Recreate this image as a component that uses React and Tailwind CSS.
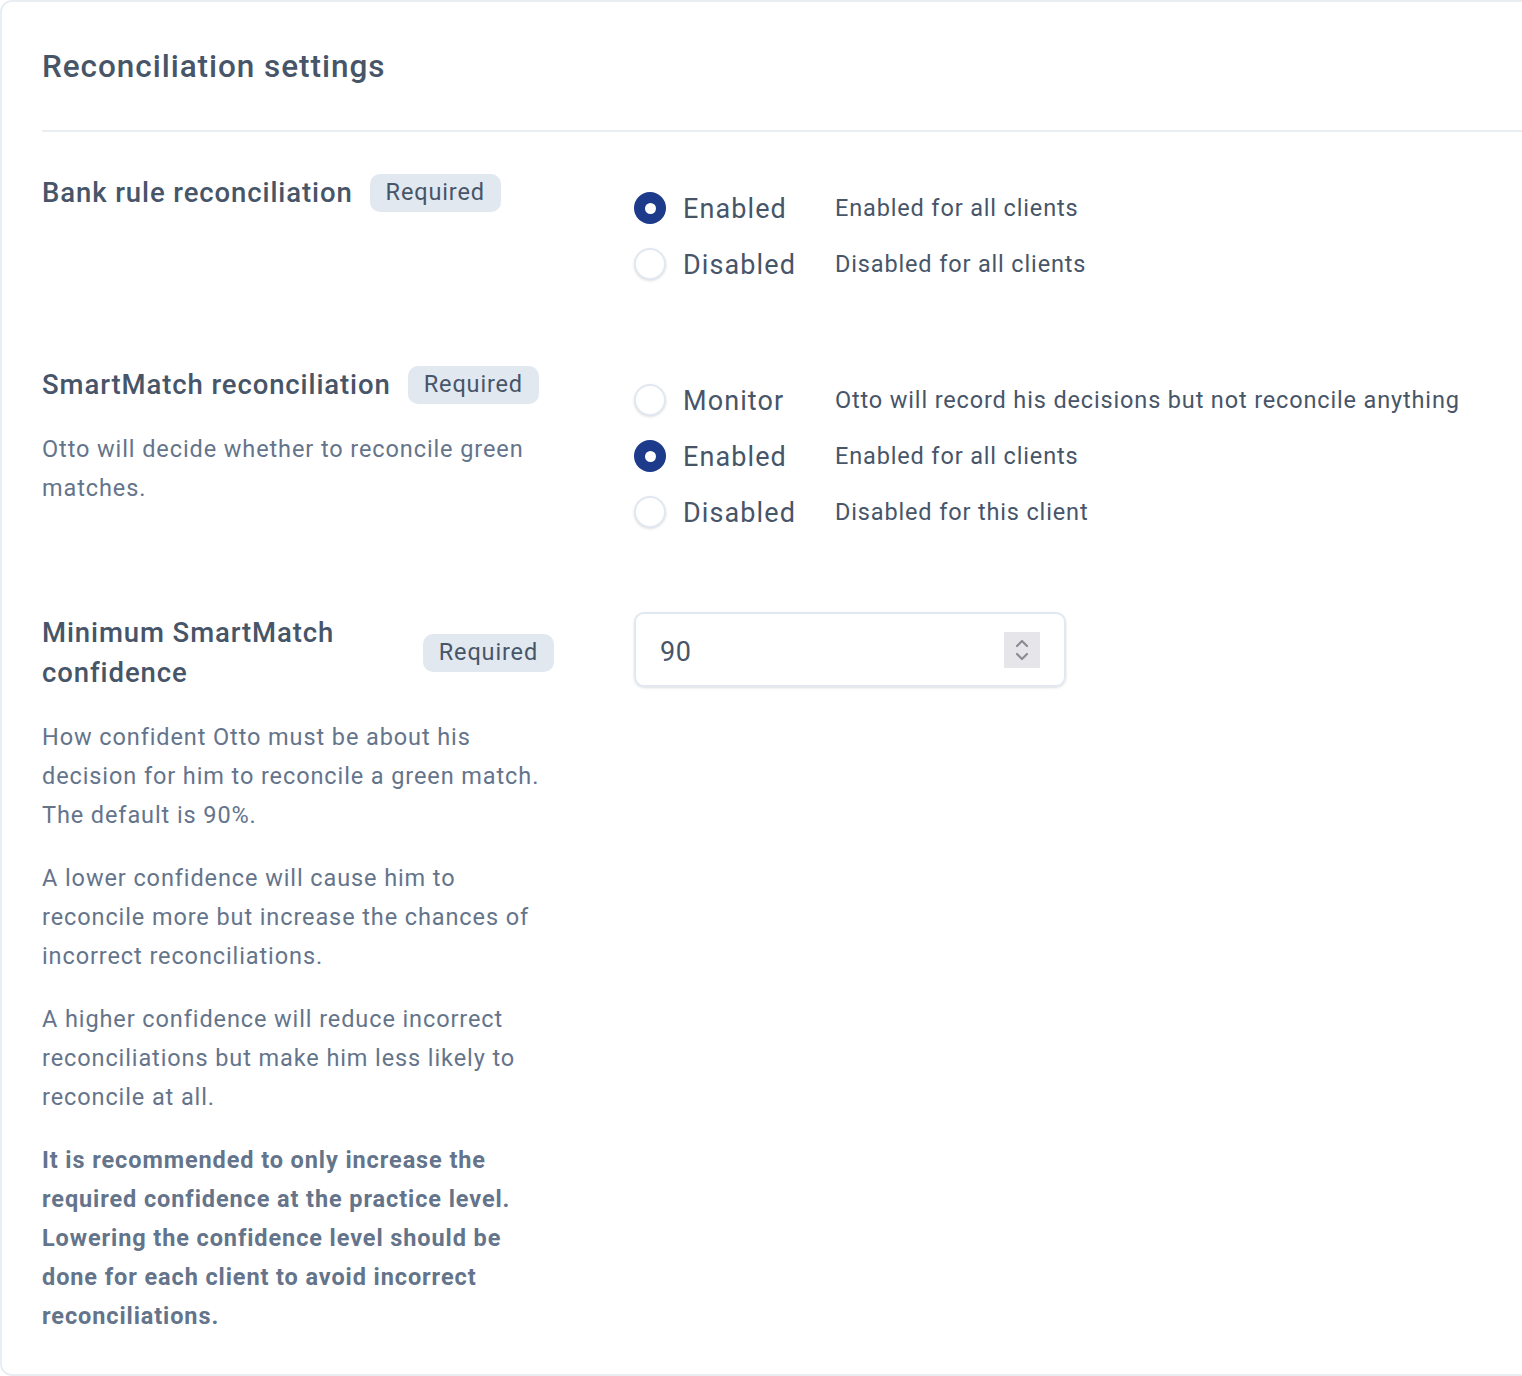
import React from "react";

function Badge() {
  return (
    <span className="shrink-0 inline-flex items-center h-[38px] px-4 rounded-[10px] bg-[#e2e8f0] text-[23.5px] text-[#475569] tracking-[0.85px]">
      Required
    </span>
  );
}

function Radio({ checked }) {
  if (checked) {
    return (
      <span className="w-8 h-8 rounded-full bg-[#1e3a8a] flex items-center justify-center shrink-0">
        <span className="w-[11px] h-[11px] rounded-full bg-white" />
      </span>
    );
  }
  return <span className="w-8 h-8 rounded-full border-2 border-[#e2e8f0] bg-white shadow-sm shrink-0" />;
}

function Option({ checked, label, desc }) {
  return (
    <div className="flex items-center h-14">
      <Radio checked={checked} />
      <span className="ml-[17px] w-[152px] pt-[2px] text-[27px] text-[#475569] tracking-[1.1px]">{label}</span>
      <span className="pt-[2px] text-[23.5px] text-[#475569] tracking-[0.85px]">{desc}</span>
    </div>
  );
}

function Heading({ children }) {
  return (
    <div className="flex items-center gap-[17px]">
      <h3 className="text-[27.5px] leading-[40px] pt-[1px] font-medium text-[#475569] tracking-[0.9px]">{children}</h3>
      <Badge />
    </div>
  );
}

function Desc({ children, bold }) {
  return (
    <p className={"text-[23.5px] leading-[39px] tracking-[0.9px] text-[#64748b] " + (bold ? "font-bold" : "")}>
      {children}
    </p>
  );
}

export default function App() {
  return (
    <div className="bg-white min-h-[1376px]" style={{ fontFamily: "Roboto, 'Noto Sans', sans-serif" }}>
      <div className="w-[1560px] h-[1376px] border-2 border-[#e9eef3] rounded-l-[12px] pt-[45px] pl-[40px] pb-[38px]">
        <h2 className="text-[31.5px] leading-[40px] font-medium text-[#475569] tracking-[0.95px]">Reconciliation settings</h2>
        <div className="mt-[43px] h-[2px] bg-[#e9eef3]" />
        <div className="pt-[40px] flex flex-col gap-[72px]">
          <div className="flex gap-[80px]">
            <div className="w-[512px] shrink-0">
              <Heading>Bank rule reconciliation</Heading>
            </div>
            <div className="pt-2">
              <Option checked label="Enabled" desc="Enabled for all clients" />
              <Option label="Disabled" desc="Disabled for all clients" />
            </div>
          </div>
          <div className="flex gap-[80px]">
            <div className="w-[512px] shrink-0">
              <Heading>SmartMatch reconciliation</Heading>
              <div className="mt-[25px]">
                <Desc>Otto will decide whether to reconcile green matches.</Desc>
              </div>
            </div>
            <div className="pt-2">
              <Option label="Monitor" desc="Otto will record his decisions but not reconcile anything" />
              <Option checked label="Enabled" desc="Enabled for all clients" />
              <Option label="Disabled" desc="Disabled for this client" />
            </div>
          </div>
          <div className="flex gap-[80px]">
            <div className="w-[512px] shrink-0">
              <Heading>Minimum SmartMatch confidence</Heading>
              <div className="mt-[25px] flex flex-col gap-[24px]">
                <Desc>How confident Otto must be about his decision for him to reconcile a green match. The default is 90%.</Desc>
                <Desc>A lower confidence will cause him to reconcile more but increase the chances of incorrect reconciliations.</Desc>
                <Desc>A higher confidence will reduce incorrect reconciliations but make him less likely to reconcile at all.</Desc>
                <Desc bold>It is recommended to only increase the required confidence at the practice level. Lowering the confidence level should be done for each client to avoid incorrect reconciliations.</Desc>
              </div>
            </div>
            <div>
              <div className="w-[432px] h-[75px] border-2 border-[#e2e8f0] rounded-[10px] shadow-sm flex items-center pl-[24px] pr-[24px]">
                <span className="flex-1 pt-[5px] text-[27px] text-[#475569] tracking-[0.5px]">90</span>
                <span className="w-[36px] h-[36px] bg-[#e6e6ea] flex items-center justify-center">
                  <svg width="16" height="28" viewBox="0 0 16 28" fill="none" stroke="#8b8b96" strokeWidth="2.2" strokeLinecap="round" strokeLinejoin="round">
                    <path d="M3 10 L8 5 L13 10" />
                    <path d="M3 18 L8 23 L13 18" />
                  </svg>
                </span>
              </div>
            </div>
          </div>
        </div>
      </div>
    </div>
  );
}
